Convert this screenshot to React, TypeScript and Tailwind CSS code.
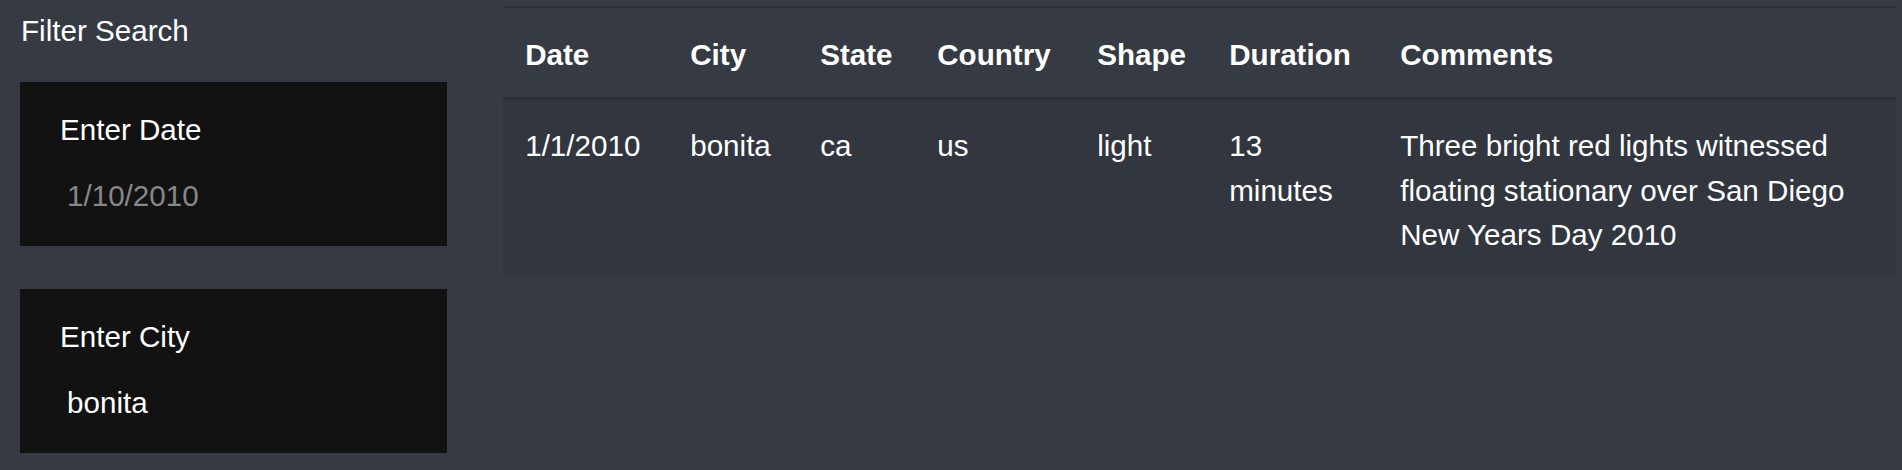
import React from "react";

const sightings = [
  {
    date: "1/1/2010",
    city: "bonita",
    state: "ca",
    country: "us",
    shape: "light",
    duration: "13 minutes",
    comments: "Three bright red lights witnessed floating stationary over San Diego New Years Day 2010",
  },
];

const columns = [
  { label: "Date", width: "w-[165px]" },
  { label: "City", width: "w-[130px]" },
  { label: "State", width: "w-[117px]" },
  { label: "Country", width: "w-[160px]" },
  { label: "Shape", width: "w-[132px]" },
  { label: "Duration", width: "w-[171px]" },
  { label: "Comments", width: "w-auto" },
];

function FilterBox({ label, placeholder, value }: { label: string; placeholder?: string; value?: string }) {
  return (
    <div className="bg-[#121212] pt-[25.6px] pb-[28px] pl-[40px] pr-4">
      <label className="block">{label}</label>
      <input
        type="text"
        placeholder={placeholder}
        defaultValue={value}
        className="mt-[21.6px] block h-[44.4px] w-full bg-transparent pl-[7px] text-white outline-none placeholder:text-[#878787]"
      />
    </div>
  );
}

export default function App() {
  return (
    <div className="min-h-[470px] bg-[#363a43] font-['Liberation_Sans',Arial,sans-serif] text-[29.6px] leading-[44.4px] text-white">
      <div className="flex">
        {/* filtros */}
        <aside className="w-[447px] shrink-0 pl-[20px]">
          <p className="mt-[9.3px] pl-[1px]">Filter Search</p>
          <div className="mt-[28.3px] flex flex-col gap-[43px]">
            <FilterBox label="Enter Date" placeholder="1/10/2010" />
            <FilterBox label="Enter City" value="bonita" />
          </div>
        </aside>

        {/* tabla */}
        <div className="ml-[56px] mt-[6px] w-[1393px] shrink-0">
          <table className="w-full table-fixed border-collapse text-left">
            <colgroup>
              {columns.map((c) => (
                <col key={c.label} className={c.width} />
              ))}
            </colgroup>
            <thead>
              <tr>
                {columns.map((c) => (
                  <th
                    key={c.label}
                    className="border-t-2 border-b-[3px] border-[#2c2f36] px-[22.2px] pt-[24.6px] pb-[19.8px] align-bottom font-bold"
                  >
                    {c.label}
                  </th>
                ))}
              </tr>
            </thead>
            <tbody>
              {sightings.map((s) => (
                <tr key={s.date + s.city} className="bg-[#32363e]">
                  <td className="px-[22.2px] pt-[24.6px] pb-[19.8px] align-top">{s.date}</td>
                  <td className="px-[22.2px] pt-[24.6px] pb-[19.8px] align-top">{s.city}</td>
                  <td className="px-[22.2px] pt-[24.6px] pb-[19.8px] align-top">{s.state}</td>
                  <td className="px-[22.2px] pt-[24.6px] pb-[19.8px] align-top">{s.country}</td>
                  <td className="px-[22.2px] pt-[24.6px] pb-[19.8px] align-top">{s.shape}</td>
                  <td className="px-[22.2px] pt-[24.6px] pb-[19.8px] align-top">{s.duration}</td>
                  <td className="px-[22.2px] pt-[24.6px] pb-[19.8px] align-top">{s.comments}</td>
                </tr>
              ))}
            </tbody>
          </table>
        </div>
      </div>
    </div>
  );
}
